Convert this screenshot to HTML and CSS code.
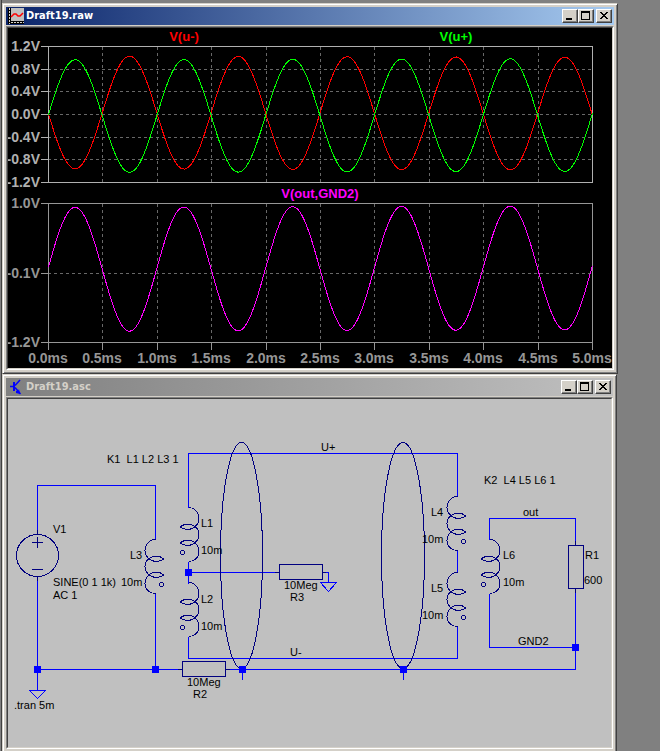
FILE: index.html
```html
<!DOCTYPE html>
<html lang="en">
<head>
<meta charset="utf-8">
<title>Draft19</title>
<link rel="stylesheet" href="styles.css">
</head>
<body>
<main class="desktop">
  <section class="window plot-window">
    <header class="titlebar active">
      <svg class="icon" viewBox="0 0 16 16" aria-hidden="true">
        <rect width="16" height="16" fill="#000"/>
        <rect x="3" width="13" height="13" fill="#c0c0c0"/>
        <path d="M1.5 0V16" stroke="#d4d0c8" stroke-dasharray="2 1"/>
        <path d="M3 14.5H16" stroke="#d4d0c8" stroke-dasharray="2 1"/>
        <path d="M3 9L6 6H8L10 8H12L15 5" fill="none" stroke="#f00" stroke-width="1.5"/>
      </svg>
      <h1 class="caption">Draft19.raw</h1>
      <div class="controls">
        <button type="button" aria-label="Minimize"><svg viewBox="0 0 12 10"><path d="M2 8H8" stroke-width="2"/></svg></button>
        <button type="button" aria-label="Maximize"><svg viewBox="0 0 12 10"><path d="M1 1H10M1.5 0V9M9.5 0V9M1 8.5H10" /><path d="M1 1H10" stroke-width="2"/></svg></button>
        <button type="button" aria-label="Close" class="close"><svg viewBox="0 0 12 10"><path d="M2 1h2v1h1v1h2V2h1V1h2v1H9v1H8v1H7v1h1v1h1v1h1v1H8V7H7V6H5v1H4v1H2V7h1V6h1V5h1V4H4V3H3V2H2z" class="solid"/></svg></button>
      </div>
    </header>
    <div class="client">
      <svg class="canvas plots" viewBox="8 28 604 340" role="img" aria-label="Waveforms">
        <g class="grid">
          <path d="M102.500 47V182M157.500 47V182M211.500 47V182M266.500 47V182M320.500 47V182M374.500 47V182M429.500 47V182M483.500 47V182M538.500 47V182"/>
          <path d="M48 69.500H592M48 91.500H592M48 114.500H592M48 137.500H592M48 159.500H592"/>
          <path d="M102.500 204V342M157.500 204V342M211.500 204V342M266.500 204V342M320.500 204V342M374.500 204V342M429.500 204V342M483.500 204V342M538.500 204V342M48 273.500H592"/>
        </g>
        <path class="axis upper" d="M48.500 46.500H592.500V182.500H48.500ZM41 46.500H48M41 69.500H48M41 91.500H48M41 114.500H48M41 137.500H48M41 159.500H48M41 182.500H48"/>
        <path class="axis" d="M48.500 203.500H592.500V342.500H48.500ZM41 203.500H48M41 273.500H48M41 342.500H48M48.500 343V350M102.500 343V350M157.500 343V350M211.500 343V350M266.500 343V350M320.500 343V350M374.500 343V350M429.500 343V350M483.500 343V350M538.500 343V350M592.500 343V350"/>
        <g class="ylabels upper">
          <text x="40" y="51">1.2V</text><text x="40" y="74">0.8V</text><text x="40" y="96">0.4V</text><text x="40" y="119">0.0V</text><text x="40" y="142">-0.4V</text><text x="40" y="164">-0.8V</text><text x="40" y="187">-1.2V</text>
        </g>
        <g class="ylabels">
          <text x="40" y="208">1.0V</text><text x="40" y="278">-0.1V</text><text x="40" y="347">-1.2V</text>
        </g>
        <g class="xlabels">
          <text x="48" y="363">0.0ms</text><text x="102" y="363">0.5ms</text><text x="157" y="363">1.0ms</text><text x="211" y="363">1.5ms</text><text x="266" y="363">2.0ms</text><text x="320" y="363">2.5ms</text><text x="374" y="363">3.0ms</text><text x="429" y="363">3.5ms</text><text x="483" y="363">4.0ms</text><text x="538" y="363">4.5ms</text><text x="592" y="363">5.0ms</text>
        </g>
        <g class="names">
          <text class="red" x="184" y="41">V(u-)</text><text class="green" x="456" y="41">V(u+)</text><text class="magenta" x="320" y="198">V(out,GND2)</text>
        </g>
        <polyline class="trace red" id="trace-minus"/>
        <polyline class="trace green" id="trace-plus"/>
        <polyline class="trace magenta" id="trace-out"/>
      </svg>
    </div>
  </section>

  <section class="window schematic-window">
    <header class="titlebar">
      <svg class="icon" viewBox="0 0 16 16" aria-hidden="true">
        <path d="M2 7.500H6M7 8.500L12.500 15M7 6.500L12 1" fill="none" stroke="#00f" stroke-width="1.500"/>
        <path d="M5 3h2v9h-2zM8 12h2l1-2 1 5-4-1z" fill="#00f"/>
      </svg>
      <h2 class="caption">Draft19.asc</h2>
      <div class="controls">
        <button type="button" aria-label="Minimize"><svg viewBox="0 0 12 10"><path d="M2 8H8" stroke-width="2"/></svg></button>
        <button type="button" aria-label="Maximize"><svg viewBox="0 0 12 10"><path d="M1 1H10M1.500 0V9M9.500 0V9M1 8.500H10"/><path d="M1 1H10" stroke-width="2"/></svg></button>
        <button type="button" aria-label="Close" class="close"><svg viewBox="0 0 12 10"><path d="M2 1h2v1h1v1h2V2h1V1h2v1H9v1H8v1H7v1h1v1h1v1h1v1H8V7H7V6H5v1H4v1H2V7h1V6h1V5h1V4H4V3H3V2H2z" class="solid"/></svg></button>
      </div>
    </header>
    <div class="client">
      <svg class="canvas schematic" viewBox="8 399 603 348" role="img" aria-label="Circuit schematic">
        <defs>
          <g id="coil">
            <path d="M0 0C6 0 10.500 5 10.500 11C10.500 17 5 22 -1 22C-4 22 -6 21 -8 19.500C-6 17.500 -4 16.500 -1 16.500C5 16.500 10.500 21 10.500 27C10.500 33 5 38 -1 38C-4 38 -6 37 -8 35.500C-6 33.500 -4 32.500 -1 32.500C5 32.500 10.500 38 10.500 44C10.500 50 6 54 0 54"/>
            <path d="M-7 43h2l1 1v2l-1 1h-2l-1 -1v-2z"/>
          </g>
          <rect id="node" x="-3.500" y="-3.500" width="7" height="7"/>
        </defs>
        <g class="wire">
          <path d="M37.500 530V485.500H155.500V539.500M155.500 593.500V669.500M37.500 581V690.500M29.500 690.500H45.500L37.500 698.500ZM37.500 669.500H178"/>
          <path d="M188.500 507.500V453.500H457.500V496.500M188.500 636.500V658.500H457.500V626.500M457.500 550.500V572.500M188.500 561.500V583.500M188.500 572.500H275"/>
          <path d="M326 572.500H328.500V582.500M320.500 582.500H336.500L328.500 591.500ZM230 669.500H575.500V593M242.500 669.500V680M403.500 669.500V680"/>
          <path d="M489.500 539.500V518.500H575.500V541M489.500 593.500V647.500H575.500"/>
        </g>
        <g class="part">
          <circle cx="37.500" cy="555.500" r="21"/>
          <path d="M37.500 530V534.500M37.500 576.500V581M32 542.500H43M37.500 537V548M32 569.500H43"/>
          <ellipse cx="241.500" cy="555.500" rx="21" ry="113"/>
          <ellipse cx="403" cy="555.500" rx="21.500" ry="113"/>
          <rect x="182.500" y="661.500" width="43" height="15"/>
          <rect x="279.500" y="564.500" width="43" height="15"/>
          <rect x="568.500" y="545.500" width="15" height="43"/>
          <path d="M178 669.500H182M226 669.500H230M275 572.500H279M323 572.500H326M575.500 541V545M575.500 589V593"/>
          <use href="#coil" transform="translate(155.500 539.500) scale(-1 1)"/>
          <use href="#coil" transform="translate(188.500 507.500)"/>
          <use href="#coil" transform="translate(188.500 582.500)"/>
          <use href="#coil" transform="translate(457.500 496.500) scale(-1 1)"/>
          <use href="#coil" transform="translate(457.500 572.500) scale(-1 1)"/>
          <use href="#coil" transform="translate(489.500 539.500)"/>
        </g>
        <g class="nodes">
          <use href="#node" x="37.500" y="669.500"/><use href="#node" x="155.500" y="669.500"/><use href="#node" x="188.500" y="572.500"/><use href="#node" x="242.500" y="669.500"/><use href="#node" x="403.500" y="669.500"/><use href="#node" x="575.500" y="647.500"/>
        </g>
        <g class="notes">
          <text x="107" y="463">K1&#160; L1 L2 L3 1</text><text x="484" y="484">K2&#160; L4 L5 L6 1</text>
          <text x="53" y="533">V1</text><text x="53" y="586">SINE(0 1 1k)</text><text x="53" y="599">AC 1</text><text x="14" y="709">.tran 5m</text>
          <text x="130" y="559">L3</text><text x="121" y="586">10m</text>
          <text x="201" y="527">L1</text><text x="201" y="554">10m</text>
          <text x="201" y="603">L2</text><text x="201" y="630">10m</text>
          <text x="187" y="686">10Meg</text><text x="193" y="698">R2</text>
          <text x="284" y="589">10Meg</text><text x="290" y="601">R3</text>
          <text x="321" y="451">U+</text><text x="290" y="656">U-</text>
          <text x="431" y="516">L4</text><text x="422" y="543">10m</text>
          <text x="431" y="592">L5</text><text x="422" y="619">10m</text>
          <text x="503" y="559">L6</text><text x="503" y="586">10m</text>
          <text x="523" y="516">out</text><text x="518" y="645">GND2</text>
          <text x="585" y="559">R1</text><text x="584" y="584">600</text>
        </g>
      </svg>
    </div>
  </section>
</main>
<script src="script.js"></script>
</body>
</html>
```
FILE: styles.css
```css
* { box-sizing: border-box; }

body {
  margin: 0;
  background: #808080;
  font-family: "Liberation Sans", Arial, sans-serif;
  overflow: hidden;
}

.desktop {
  margin-left: 1px;
  padding: 3px 42px 0 0;
  border-left: 1px solid #404040;
}

.window {
  padding: 2px;
  background: #d4d0c8;
  border: 1px solid;
  border-color: #d4d0c8 #404040 #404040 #d4d0c8;
  box-shadow: inset 1px 1px #fff, inset -1px -1px #808080;
}

.plot-window { padding: 3px; }

.schematic-window {
  padding: 3px 3px 2px;
  margin-right: 1px;
  border-bottom: 0;
  box-shadow: inset 1px 1px #fff, inset -1px 0 #808080;
}

.titlebar {
  display: flex;
  align-items: center;
  gap: 2px;
  height: 18px;
  padding: 0 2px;
  margin-bottom: 1px;
  background: linear-gradient(to right, #808080, #c0c0c0);
  color: #d4d0c8;
}

.titlebar.active {
  background: linear-gradient(to right, #0a246a, #a6caf0);
  color: #fff;
}

.icon { width: 16px; height: 16px; flex: none; }

.caption {
  flex: 1;
  margin: 0;
  font: bold 11px/16px "DejaVu Sans Condensed", "DejaVu Sans", sans-serif;
}

.controls { display: flex; }

.controls button {
  display: flex;
  width: 16px;
  height: 14px;
  padding: 1px;
  background: #d4d0c8;
  border: 1px solid;
  border-color: #fff #404040 #404040 #fff;
  box-shadow: inset -1px -1px #808080;
}

.controls .close { margin-left: 2px; }

.controls svg {
  width: 12px;
  height: 10px;
  fill: none;
  stroke: #000;
  shape-rendering: crispEdges;
}

.controls .solid { fill: #000; stroke: none; }

.client {
  border: 1px solid;
  border-color: #808080 #fff #fff #808080;
}

.canvas {
  display: block;
  width: 100%;
  height: auto;
  border: 1px solid;
  border-color: #404040 #d4d0c8 #d4d0c8 #404040;
  shape-rendering: crispEdges;
}

.plots { background: #000; font-size: 14px; font-weight: bold; }
.schematic { background: #c0c0c0; font-size: 11px; }

.grid { stroke: #686868; stroke-dasharray: 3 3; }
.axis { fill: none; stroke: #969696; }
.axis.upper { stroke: #b0b0b0; }

.ylabels, .xlabels { fill: #969696; }
.ylabels.upper { fill: #b0b0b0; }
.ylabels { text-anchor: end; }
.xlabels, .names { text-anchor: middle; }

.names { font-size: 13px; }
.names .red { fill: #f00; }
.names .green { fill: #0f0; }
.names .magenta { fill: #f0f; }

.trace { fill: none; }
.trace.red { stroke: #f00; }
.trace.green { stroke: #0f0; }
.trace.magenta { stroke: #f0f; }

.wire { fill: none; stroke: #00f; }
.part { fill: none; stroke: #000080; }
.nodes { fill: #00f; }
.notes { fill: #000; }
```
FILE: script.js
```js
// Draws five periods of a sine whose mean level drifts from one value to another.
function drawTrace(id, amplitude, meanStart, meanEnd, phase) {
  const left = 48.5;
  const width = 544;
  const points = [];
  for (let i = 0; i <= width; i += 2) {
    const t = i / width;
    const mean = meanStart + (meanEnd - meanStart) * t;
    const y = mean - amplitude * Math.sin(t * Math.PI * 10 + phase);
    points.push((left + i) + "," + y.toFixed(2));
  }
  document.getElementById(id).setAttribute("points", points.join(" "));
}

drawTrace("trace-minus", -56.4, 112.4, 113.7, 0.03);
drawTrace("trace-plus", 56.4, 116.2, 115, 0.03);
drawTrace("trace-out", 62, 269.4, 267.8, 0.037);
```
